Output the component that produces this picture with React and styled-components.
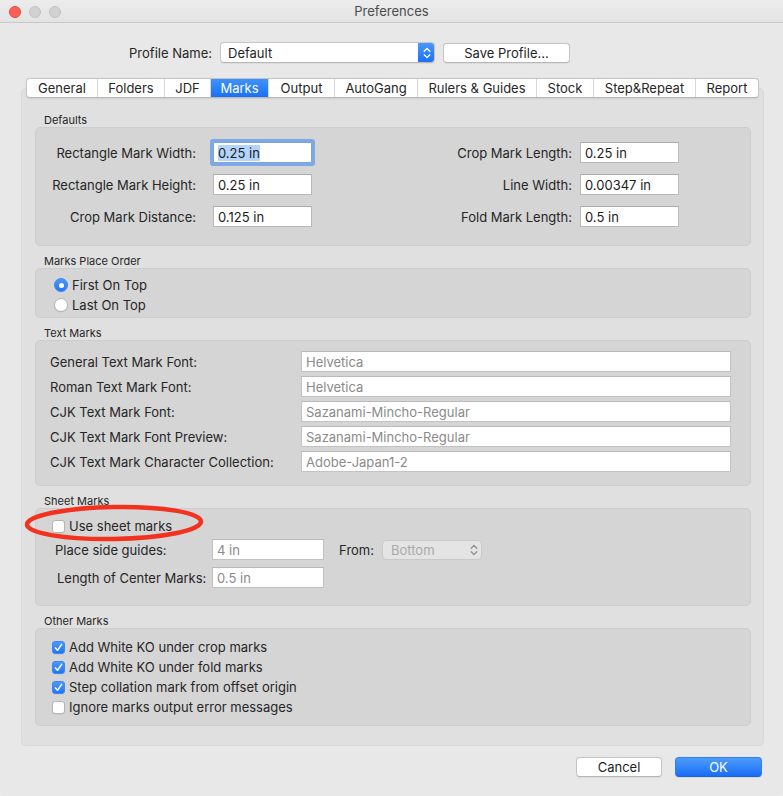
import React from "react";
import styled, { createGlobalStyle, css } from "styled-components";

const GlobalStyle = createGlobalStyle`
  html, body {
    margin: 0;
    padding: 0;
    background: #efebe7;
  }
  body {
    font-family: Inter, "Noto Sans", "Liberation Sans", sans-serif;
    font-size: 13px;
    color: #262626;
    -webkit-font-smoothing: antialiased;
  }
`;

const tabs = [
  { label: "General", w: 70 },
  { label: "Folders", w: 67 },
  { label: "JDF", w: 46 },
  { label: "Marks", w: 58, active: true },
  { label: "Output", w: 66 },
  { label: "AutoGang", w: 83 },
  { label: "Rulers & Guides", w: 119 },
  { label: "Stock", w: 57 },
  { label: "Step&Repeat", w: 102 },
  { label: "Report", w: 63 },
];

const defaultsLeft = [
  { label: "Rectangle Mark Width:", value: "0.25 in", focused: true },
  { label: "Rectangle Mark Height:", value: "0.25 in" },
  { label: "Crop Mark Distance:", value: "0.125 in" },
];

const defaultsRight = [
  { label: "Crop Mark Length:", value: "0.25 in" },
  { label: "Line Width:", value: "0.00347 in" },
  { label: "Fold Mark Length:", value: "0.5 in" },
];

const textMarks = [
  { label: "General Text Mark Font:", value: "Helvetica" },
  { label: "Roman Text Mark Font:", value: "Helvetica" },
  { label: "CJK Text Mark Font:", value: "Sazanami-Mincho-Regular" },
  { label: "CJK Text Mark Font Preview:", value: "Sazanami-Mincho-Regular" },
  { label: "CJK Text Mark Character Collection:", value: "Adobe-Japan1-2" },
];

const otherMarks = [
  { label: "Add White KO under crop marks", checked: true },
  { label: "Add White KO under fold marks", checked: true },
  { label: "Step collation mark from offset origin", checked: true },
  { label: "Ignore marks output error messages", checked: false },
];

const Chevrons = ({ color }) => (
  <svg width="8" height="14" viewBox="0 0 8 14" fill="none">
    <path d="M1.2 5.2 L4 2.4 L6.8 5.2" stroke={color} strokeWidth="1.3" strokeLinecap="round" strokeLinejoin="round" />
    <path d="M1.2 8.8 L4 11.6 L6.8 8.8" stroke={color} strokeWidth="1.3" strokeLinecap="round" strokeLinejoin="round" />
  </svg>
);

const Tick = () => (
  <svg width="9" height="9" viewBox="0 0 9 9" fill="none">
    <path d="M1.4 4.9 L3.5 7.3 L7.6 1.3" stroke="#fff" strokeWidth="1.5" strokeLinecap="round" strokeLinejoin="round" />
  </svg>
);

const Checkbox = ({ checked, label }) => (
  <CheckRow>
    <Box $checked={checked}>{checked && <Tick />}</Box>
    <span>{label}</span>
  </CheckRow>
);

const Radio = ({ checked, label }) => (
  <CheckRow $gap={4}>
    <RadioDot $checked={checked} />
    <span>{label}</span>
  </CheckRow>
);

const App = () => {
  return (
    <>
      <GlobalStyle />
      <Window>
        <TitleBar>
          <Lights>
            <Light $color="#fe5f57" $edge="#e2463f" />
            <Light $color="#d1d1d1" $edge="#c3c3c3" />
            <Light $color="#d1d1d1" $edge="#c3c3c3" />
          </Lights>
          <Title>Preferences</Title>
          <span />
        </TitleBar>

        <Content>
          <ProfileRow>
            <FieldLabel>Profile Name:</FieldLabel>
            <PopUp>
              <span>Default</span>
              <Stepper>
                <Chevrons color="#fff" />
              </Stepper>
            </PopUp>
            <PushButton>Save Profile...</PushButton>
          </ProfileRow>

          <TabView>
            <TabStrip>
              {tabs.map((t) => (
                <Tab key={t.label} $w={t.w} $active={t.active}>
                  {t.label}
                </Tab>
              ))}
            </TabStrip>

            <Pane>
              <Group>
                <GroupTitle>Defaults</GroupTitle>
                <DefaultsBox>
                  <FieldColumn $label="160px" $gap="17px">
                    {defaultsLeft.map((f) => (
                      <React.Fragment key={f.label}>
                        <FieldLabel>{f.label}</FieldLabel>
                        <TextField $focused={f.focused}>
                          {f.focused ? <Selection>{f.value}</Selection> : f.value}
                        </TextField>
                      </React.Fragment>
                    ))}
                  </FieldColumn>
                  <FieldColumn $label="auto" $gap="8px">
                    {defaultsRight.map((f) => (
                      <React.Fragment key={f.label}>
                        <FieldLabel>{f.label}</FieldLabel>
                        <TextField>{f.value}</TextField>
                      </React.Fragment>
                    ))}
                  </FieldColumn>
                </DefaultsBox>
              </Group>

              <Group>
                <GroupTitle>Marks Place Order</GroupTitle>
                <OrderBox>
                  <Radio checked label="First On Top" />
                  <Radio label="Last On Top" />
                </OrderBox>
              </Group>

              <Group>
                <GroupTitle>Text Marks</GroupTitle>
                <TextMarksBox>
                  {textMarks.map((f) => (
                    <React.Fragment key={f.label}>
                      <PlainLabel>{f.label}</PlainLabel>
                      <TextField $muted>{f.value}</TextField>
                    </React.Fragment>
                  ))}
                </TextMarksBox>
              </Group>

              <Group>
                <GroupTitle>Sheet Marks</GroupTitle>
                <SheetBox>
                  <Checkbox label="Use sheet marks" />
                  <SheetGrid>
                    <PlainLabel>Place side guides:</PlainLabel>
                    <TextField $muted>4 in</TextField>
                    <FieldLabel $pad={8}>From:</FieldLabel>
                    <PopUp $disabled>
                      <span>Bottom</span>
                      <Stepper $disabled>
                        <Chevrons color="#8e8e8e" />
                      </Stepper>
                    </PopUp>
                    <PlainLabel $indent={2}>Length of Center Marks:</PlainLabel>
                    <TextField $muted>0.5 in</TextField>
                  </SheetGrid>
                  <Highlight width="186" height="44" viewBox="0 0 186 44">
                    <ellipse
                      cx="93"
                      cy="22"
                      rx="87"
                      ry="16"
                      fill="none"
                      stroke="#f2321f"
                      strokeWidth="4.5"
                      transform="rotate(-1 93 22)"
                    />
                  </Highlight>
                </SheetBox>
              </Group>

              <Group>
                <GroupTitle>Other Marks</GroupTitle>
                <OtherBox>
                  {otherMarks.map((m) => (
                    <Checkbox key={m.label} checked={m.checked} label={m.label} />
                  ))}
                </OtherBox>
              </Group>
            </Pane>
          </TabView>

          <ButtonRow>
            <PushButton $w={86}>Cancel</PushButton>
            <PushButton $w={87} $primary>
              OK
            </PushButton>
          </ButtonRow>
        </Content>
      </Window>
    </>
  );
};

export default App;

const Window = styled.div`
  width: 783px;
  height: 796px;
  box-sizing: border-box;
  background: #e8e8e8;
  border-radius: 5px;
  overflow: hidden;
  display: flex;
  flex-direction: column;
`;

const TitleBar = styled.div`
  height: 22px;
  flex: none;
  display: grid;
  grid-template-columns: 1fr auto 1fr;
  align-items: center;
  background: linear-gradient(#ececec, #e3e3e3);
  border-bottom: 1px solid #c8c8c8;
`;

const Lights = styled.div`
  display: flex;
  gap: 8px;
  padding-left: 9px;
  padding-top: 1px;
`;

const Light = styled.span`
  width: 12px;
  height: 12px;
  box-sizing: border-box;
  border-radius: 50%;
  background: ${(p) => p.$color};
  border: 0.5px solid ${(p) => p.$edge};
`;

const Title = styled.div`
  font-size: 13px;
  color: #4d4d4d;
`;

const Content = styled.div`
  flex: 1;
  display: flex;
  flex-direction: column;
  padding: 19px 19px 0 21px;
`;

const ProfileRow = styled.div`
  display: grid;
  grid-template-columns: 191px 215px 127px;
  column-gap: 8px;
  align-items: center;
  height: 21px;
`;

const FieldLabel = styled.div`
  text-align: right;
  white-space: nowrap;
  color: #262626;
  padding-right: ${(p) => p.$pad || 0}px;
`;

const PlainLabel = styled.div`
  white-space: nowrap;
  color: #262626;
  padding-left: ${(p) => p.$indent || 0}px;
`;

const PopUp = styled.div`
  position: relative;
  height: 21px;
  box-sizing: border-box;
  display: flex;
  align-items: center;
  padding-left: 7px;
  border-radius: 4px;
  background: #fff;
  border: 1px solid #c6c6c6;
  border-bottom-color: #b9b9b9;
  box-shadow: 0 0.5px 1px rgba(0, 0, 0, 0.06);
  color: #1f1f1f;
  overflow: hidden;

  ${(p) =>
    p.$disabled &&
    css`
      height: 20px;
      padding-left: 8px;
      background: #e4e4e4;
      border-color: #c9c9c9;
      color: #a9a9a9;
      box-shadow: none;
    `}
`;

const Stepper = styled.span`
  position: absolute;
  top: -1px;
  right: -1px;
  bottom: -1px;
  width: 17px;
  display: flex;
  align-items: center;
  justify-content: center;
  border-radius: 0 4px 4px 0;
  background: ${(p) => (p.$disabled ? "transparent" : "linear-gradient(#4b9afb, #1b6ff4)")};
`;

const PushButton = styled.div`
  height: 20px;
  width: ${(p) => (p.$w ? `${p.$w}px` : "auto")};
  box-sizing: border-box;
  display: flex;
  align-items: center;
  justify-content: center;
  border-radius: 4px;
  background: #fff;
  border: 1px solid #c4c4c4;
  border-bottom-color: #b6b6b6;
  box-shadow: 0 0.5px 1px rgba(0, 0, 0, 0.06);
  color: #1f1f1f;

  ${(p) =>
    p.$primary &&
    css`
      background: linear-gradient(#4d9cfb, #1a6ef5);
      border-color: #2f7ff5;
      border-bottom-color: #1863e0;
      color: #fff;
    `}
`;

const TabView = styled.div`
  display: flex;
  flex-direction: column;
  margin-top: 15px;
`;

const TabStrip = styled.div`
  align-self: center;
  display: flex;
  height: 20px;
  box-sizing: border-box;
  margin-bottom: -10px;
  position: relative;
  z-index: 1;
  background: #fff;
  border: 1px solid #c4c4c4;
  border-bottom-color: #b8b8b8;
  border-radius: 4px;
  overflow: hidden;
  box-shadow: 0 0.5px 1px rgba(0, 0, 0, 0.08);
`;

const Tab = styled.div`
  width: ${(p) => p.$w}px;
  box-sizing: border-box;
  display: flex;
  align-items: center;
  justify-content: center;
  color: #262626;
  white-space: nowrap;

  & + & {
    border-left: 1px solid #d6d6d6;
  }

  ${(p) =>
    p.$active &&
    css`
      background: linear-gradient(#3f92fa, #1b71f4);
      color: #fff;
      && {
        border-left-color: #2a7cf4;
      }
      & + div {
        border-left-color: #2a7cf4;
      }
    `}
`;

const Pane = styled.div`
  display: flex;
  flex-direction: column;
  gap: 8px;
  padding: 24px 12px 19px 13px;
  background: #e0e0e0;
  border: 1px solid #d9d9d9;
  border-radius: 5px;
`;

const Group = styled.div`
  display: flex;
  flex-direction: column;
`;

const GroupTitle = styled.div`
  font-size: 11px;
  line-height: 14px;
  padding-left: 9px;
  color: #262626;
`;

const GroupBox = styled.div`
  position: relative;
  background: #d5d5d5;
  border: 1px solid #cdcdcd;
  border-radius: 5px;
`;

const DefaultsBox = styled(GroupBox)`
  display: flex;
  justify-content: space-between;
  padding: 14px 71px 18px 0;
`;

const FieldColumn = styled.div`
  display: grid;
  grid-template-columns: ${(p) => p.$label} 99px;
  column-gap: ${(p) => p.$gap};
  row-gap: 11px;
  align-items: center;
`;

const TextField = styled.div`
  height: 21px;
  box-sizing: border-box;
  display: flex;
  align-items: center;
  padding-left: 4px;
  background: #fff;
  border: 1px solid #b9b9b9;
  border-top-color: #ababab;
  color: ${(p) => (p.$muted ? "#8a8a8a" : "#1c1c1c")};
  white-space: nowrap;
  overflow: hidden;

  ${(p) =>
    p.$muted &&
    css`
      border-color: #c3c3c3;
      border-top-color: #bababa;
    `}

  ${(p) =>
    p.$focused &&
    css`
      border-color: #7aa3e0;
      box-shadow: 0 0 0 3px #7fa8e9;
      border-radius: 1px;
    `}
`;

const Selection = styled.span`
  background: #b3d5fd;
  line-height: 16px;
`;

const OrderBox = styled(GroupBox)`
  display: flex;
  flex-direction: column;
  padding: 6px 0 2px 18px;
`;

const CheckRow = styled.div`
  display: flex;
  align-items: center;
  gap: ${(p) => p.$gap || 4}px;
  height: 20px;
  white-space: nowrap;
  color: #262626;
`;

const Box = styled.span`
  width: 13px;
  height: 13px;
  box-sizing: border-box;
  border-radius: 3px;
  display: flex;
  align-items: center;
  justify-content: center;
  background: ${(p) => (p.$checked ? "linear-gradient(#4a98fa, #2176f4)" : "#fff")};
  border: 1px solid ${(p) => (p.$checked ? "#3a86f2" : "#b4b4b4")};
  box-shadow: 0 0.5px 0.5px rgba(0, 0, 0, 0.08);
`;

const RadioDot = styled.span`
  width: 14px;
  height: 14px;
  box-sizing: border-box;
  border-radius: 50%;
  display: flex;
  align-items: center;
  justify-content: center;
  background: ${(p) => (p.$checked ? "linear-gradient(#4a98fa, #2176f4)" : "#fff")};
  border: 1px solid ${(p) => (p.$checked ? "#3a86f2" : "#b4b4b4")};
  box-shadow: 0 0.5px 0.5px rgba(0, 0, 0, 0.08);

  &::after {
    content: "";
    display: ${(p) => (p.$checked ? "block" : "none")};
    width: 5px;
    height: 5px;
    border-radius: 50%;
    background: #fff;
  }
`;

const TextMarksBox = styled(GroupBox)`
  display: grid;
  grid-template-columns: 1fr 430px;
  row-gap: 4px;
  align-items: center;
  padding: 10px 19px 13px 14px;
`;

const SheetBox = styled(GroupBox)`
  display: flex;
  flex-direction: column;
  padding: 8px 0 17px 16px;
  gap: 4px;

  & > ${CheckRow} {
    height: 18px;
  }
`;

const SheetGrid = styled.div`
  display: grid;
  grid-template-columns: 157px 112px 58px 100px;
  grid-auto-rows: 21px;
  row-gap: 7px;
  align-items: center;
  margin-left: 3px;
`;

const Highlight = styled.svg`
  position: absolute;
  left: -15px;
  top: -8px;
  pointer-events: none;
`;

const OtherBox = styled(GroupBox)`
  display: flex;
  flex-direction: column;
  padding: 8px 0 8px 16px;
`;

const ButtonRow = styled.div`
  display: flex;
  justify-content: flex-end;
  gap: 13px;
  margin-top: 11px;
  padding-right: 2px;
`;
